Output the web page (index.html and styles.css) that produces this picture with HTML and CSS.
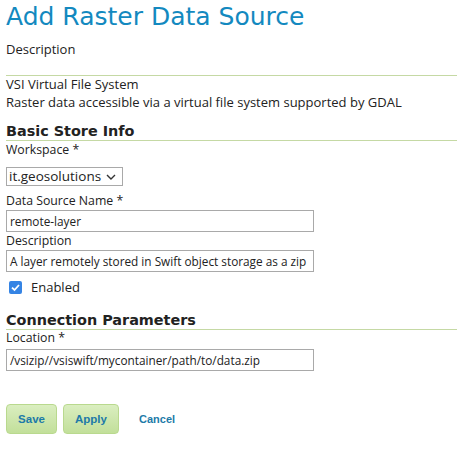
FILE: index.html
```html
<!DOCTYPE html>
<html>
<head>
<meta charset="utf-8">
<link rel="stylesheet" href="styles.css">
</head>
<body>
<div class="page">
  <h1 class="title">Add Raster Data Source</h1>
  <p class="desc-label">Description</p>
  <div class="desc-box">
    <div>VSI Virtual File System</div>
    <div>Raster data accessible via a virtual file system supported by GDAL</div>
  </div>
  <form class="form">
    <h2 class="section">Basic Store Info</h2>
    <label class="label">Workspace *</label>
    <div class="select"><span>it.geosolutions</span><svg class="chev" width="10" height="6" viewBox="0 0 10 6"><path d="M1 1 L5 5 L9 1" fill="none" stroke="#333" stroke-width="1.4"/></svg></div>
    <label class="label label-name">Data Source Name *</label>
    <div class="input">remote-layer</div>
    <label class="label">Description</label>
    <div class="input">A layer remotely stored in Swift object storage as a zip</div>
    <div class="check-row">
      <span class="check"><svg width="13" height="13" viewBox="0 0 13 13"><rect width="13" height="13" rx="2" fill="#3584e4"/><path d="M3 6.6 L5.5 9 L10 4" fill="none" stroke="#fff" stroke-width="1.8"/></svg></span>
      <span>Enabled</span>
    </div>
    <h2 class="section section-2">Connection Parameters</h2>
    <label class="label label-loc">Location *</label>
    <div class="input">/vsizip//vsiswift/mycontainer/path/to/data.zip</div>
    <div class="buttons">
      <span class="btn btn-save">Save</span>
      <span class="btn btn-apply">Apply</span>
      <span class="cancel">Cancel</span>
    </div>
  </form>
</div>
</body>
</html>
```
FILE: styles.css
```css
* { box-sizing: border-box; }
html, body { margin: 0; padding: 0; background: #fff; }
body {
  font-family: "Open Sans", "DejaVu Sans", sans-serif;
  font-size: 13px;
  color: #222;
}
.page { padding: 0 0 0 6px; }
.title {
  margin: 0;
  padding-top: 2px;
  font-family: "DejaVu Sans", sans-serif;
  font-weight: normal;
  font-size: 25px;
  line-height: 30px;
  color: #1389bf;
}
.desc-label { margin: 8px 0 0; line-height: 18px; }
.desc-box {
  margin-top: 17px;
  border-top: 1px solid #c5d9a4;
  padding-top: 0;
  line-height: 18px;
}
.desc-box > div:first-child { margin-top: -1px; }
.form { display: flex; flex-direction: column; align-items: flex-start; }
.section {
  margin: 11px 0 0;
  width: 100%;
  font-family: "DejaVu Sans", sans-serif;
  font-weight: bold;
  font-size: 14.4px;
  line-height: 18px;
  color: #222;
  border-bottom: 1px solid #c5d9a4;
}
.section-2 { margin-top: 15px; }
.label { display: block; line-height: 18px; font-size: 12.3px; }
.select {
  margin-top: 8px;
  width: 117px;
  height: 19px;
  border: 1px solid #a9a9a9;
  display: flex;
  align-items: center;
  justify-content: space-between;
  padding: 0 6px 0 2px;
  line-height: 17px;
  font-size: 13.5px;
}
.chev { margin-left: 4px; }
.label-name { margin-top: 6px; }
.label-loc { margin-top: -1px; }
.input {
  width: 308px;
  height: 22px;
  border: 1px solid #a9a9a9;
  padding: 0 3px;
  line-height: 20px;
  font-size: 11.8px;
  white-space: nowrap;
  overflow: hidden;
}
.label-loc + .input { margin-top: 2px; }
.check-row {
  display: flex;
  align-items: center;
  gap: 9px;
  margin-top: 6px;
  padding-left: 3px;
  line-height: 18px;
}
.check { display: flex; }
.buttons {
  display: flex;
  align-items: center;
  margin-top: 33px;
  gap: 6px;
}
.btn {
  height: 30px;
  display: flex;
  align-items: center;
  justify-content: center;
  border: 1px solid #b9d98e;
  border-radius: 4px;
  background: linear-gradient(#daeec0, #c2df9a);
  color: #1d7aa8;
  font-family: "Liberation Sans", Arial, sans-serif;
  font-weight: bold;
  font-size: 11.5px;
}
.btn-save { width: 51px; }
.btn-apply { width: 56px; }
.cancel {
  margin-left: 14px;
  color: #1d7aa8;
  font-family: "Liberation Sans", Arial, sans-serif;
  font-weight: bold;
  font-size: 11px;
}
```
